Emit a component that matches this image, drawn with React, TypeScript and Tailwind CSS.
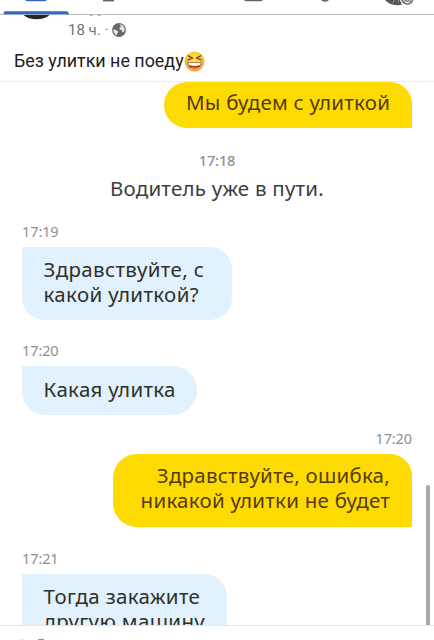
import React from "react";

const chatFont = "font-['Noto_Sans','Open_Sans',sans-serif]";

function Line({ children }: { children: React.ReactNode }) {
  return <span className="block whitespace-nowrap leading-[25px]">{children}</span>;
}

function Time({ children, className }: { children: React.ReactNode; className: string }) {
  return (
    <div className={`h-4 text-[14.5px] leading-4 tracking-[-0.1px] text-[#8e8e8e] ${className}`}>{children}</div>
  );
}

function TabBar() {
  return (
    <header className="h-[15px] shrink-0 border-b border-[#bdbdbd] bg-white">
      <svg width="434" height="15" viewBox="0 0 434 15">
        <path d="M25 0h22q-1 1.2-3 1.2H28q-2 0-3-1.2z" fill="#3a62b8" />
        <path d="M3.5 14.2q0-2.9 2-2.9h61q2 0 2.5 2.9z" fill="#2e68c8" />
        <path d="M103 0h11v1.4h-11z" fill="#606266" />
        <path d="M244 0h19q-1 1.2-3 1.2h-13q-2 0-3-1.2z" fill="#606266" />
        <path d="M321 0h8q-1.5 1.8-4 1.8T321 0z" fill="#606266" />
        <path d="M385 0q5 5.2 12 5.2 3 0 5-.7L400 0z" fill="#55565a" />
        <path d="M393 3l1.5-3M398.5 0v2.5" stroke="#a4a5a8" strokeWidth=".8" fill="none" />
        <circle cx="407.3" cy="-1.4" r="7.2" fill="#fff" />
        <circle cx="407.3" cy="-1.4" r="5.6" fill="#e9e9ea" stroke="#606266" strokeWidth="1.3" />
        <path d="M403.5 1h7.6" stroke="#606266" strokeWidth="1.1" />
      </svg>
    </header>
  );
}

function Globe() {
  return (
    <svg width="14" height="14" viewBox="0 0 14 14">
      <circle cx="7" cy="7" r="6.9" fill="#65676b" />
      <path d="M7.4 1.2C10.6 1.4 12.8 4 12.8 7l-1.5 2.6-1.2-.6-.4-2-2-.6-.3-1.7L9 3.6z" fill="#e3e4e6" />
      <path d="M1.3 6.2l2.6.9 2.4 1.3-.3 1.6-1 .8-.2 1.6C2.6 11.4 1.2 9 1.3 6.2z" fill="#e3e4e6" />
    </svg>
  );
}

function LaughEmoji() {
  return (
    <svg width="21" height="21" viewBox="0 0 21 21">
      <defs>
        <radialGradient id="face" cx="50%" cy="40%" r="62%">
          <stop offset="0" stopColor="#fde05a" />
          <stop offset=".6" stopColor="#fbc83c" />
          <stop offset="1" stopColor="#f0983a" />
        </radialGradient>
      </defs>
      <circle cx="10.5" cy="10.5" r="10" fill="url(#face)" />
      <path d="M4.2 4.8l4.4 2.3-4.6 1.7M16.8 4.8l-4.4 2.3 4.6 1.7" fill="none" stroke="#6b3a16" strokeWidth="1.2" strokeLinecap="round" strokeLinejoin="round" />
      <path d="M3.4 10.6q7.1 1.7 14.2 0-.4 7-7.1 7t-7.1-7z" fill="#79301c" />
      <path d="M4.2 11.3q6.3 1.3 12.6 0l-.6 2.9q-5.7 1-11.4 0z" fill="#fff" />
      <path d="M6.4 16.2q4.1-2 8.2 0-1.5 1.3-4.1 1.3t-4.1-1.3z" fill="#ee5545" />
    </svg>
  );
}

export default function App() {
  return (
    <div className="flex h-[640px] w-[434px] flex-col overflow-hidden bg-white">
      <TabBar />
      <section className="h-[66px] shrink-0 font-[Roboto,sans-serif]">
        <div className="flex h-[30px]">
          <svg width="68" height="30" viewBox="0 0 68 30" className="shrink-0">
            <path d="M23.5 0h26q-5 4.3-13 4.3T23.5 0z" fill="#202829" />
          </svg>
          <div className="flex h-[30px] items-center text-[15px] text-[#737579]">
            <span className="w-[33px] whitespace-nowrap">18 ч.</span>
            <span className="w-[11px] text-center">·</span>
            <Globe />
          </div>
          <svg width="20" height="4" viewBox="0 0 20 4" className="-ml-9">
            <path d="M0 .3h3M8 .3h3" stroke="#888" strokeWidth=".8" />
          </svg>
        </div>
        <div className="flex h-8 items-center pl-[14px] text-[17.9px] text-[#1c1d20]">
          <span className="w-[169.5px] whitespace-nowrap">Без улитки не поеду</span>
          <LaughEmoji />
        </div>
      </section>

      <main className={`relative flex h-[544px] shrink-0 flex-col overflow-hidden border-t border-[#ececec] px-[22px] ${chatFont} text-[20.5px] tracking-[0.24px]`}>
        <div className="h-[46px] w-[248px] shrink-0 self-end rounded-l-[23px] rounded-tr-[22px] bg-[#fedb00] pl-[22px] pt-[8px] text-[#553a10]">
          <Line>Мы будем с улиткой</Line>
        </div>
        <Time className="mt-6 shrink-0 self-center font-medium">17:18</Time>
        <div className="mt-[8px] shrink-0 self-center text-[#3d3d3d]">
          <Line>Водитель уже в пути.</Line>
        </div>
        <Time className="mt-[22px] shrink-0">17:19</Time>
        <div className="mt-2 h-[73px] w-[210px] shrink-0 rounded-b-[22px] rounded-tr-[22px] bg-[#e2f1fe] pl-[21.5px] pt-[10px] tracking-[0.35px] text-[#303026]">
          <Line>Здравствуйте, с</Line>
          <Line>какой улиткой?</Line>
        </div>
        <Time className="mt-[22px] shrink-0">17:20</Time>
        <div className="mt-2 h-[49px] w-[175px] shrink-0 rounded-b-[24px] rounded-tr-[24px] bg-[#e2f1fe] pl-[21.5px] pt-[11px] tracking-[0.3px] text-[#303026]">
          <Line>Какая улитка</Line>
        </div>
        <Time className="mt-[15px] shrink-0 self-end">17:20</Time>
        <div className="mt-2 h-[73px] w-[299px] shrink-0 self-end rounded-l-[24px] rounded-tr-[22px] bg-[#fedb00] pr-[22px] pt-[9px] text-right text-[#553a10]">
          <Line>Здравствуйте, ошибка,</Line>
          <Line>никакой улитки не будет</Line>
        </div>
        <Time className="mt-[23px] shrink-0">17:21</Time>
        <div className="mt-2 h-[73px] w-[205px] shrink-0 rounded-b-[22px] rounded-tr-[22px] bg-[#e2f1fe] pl-[21.5px] pt-[10px] tracking-[0.35px] text-[#303026]">
          <Line>Тогда закажите</Line>
          <Line>другую машину</Line>
        </div>
        <div className="absolute bottom-0 right-[4px] h-[140px] w-1 rounded-t-full bg-[#aaaaaa]" />
      </main>
      <footer className="h-[15px] shrink-0 border-t border-[#e4e5e6]">
        <svg width="60" height="14" viewBox="0 0 60 14">
          <path d="M20 14q3-1.6 6 0z" fill="#f7d774" />
          <path d="M37 14q4-2.4 8 0z" fill="#5b9be8" />
        </svg>
      </footer>
    </div>
  );
}
